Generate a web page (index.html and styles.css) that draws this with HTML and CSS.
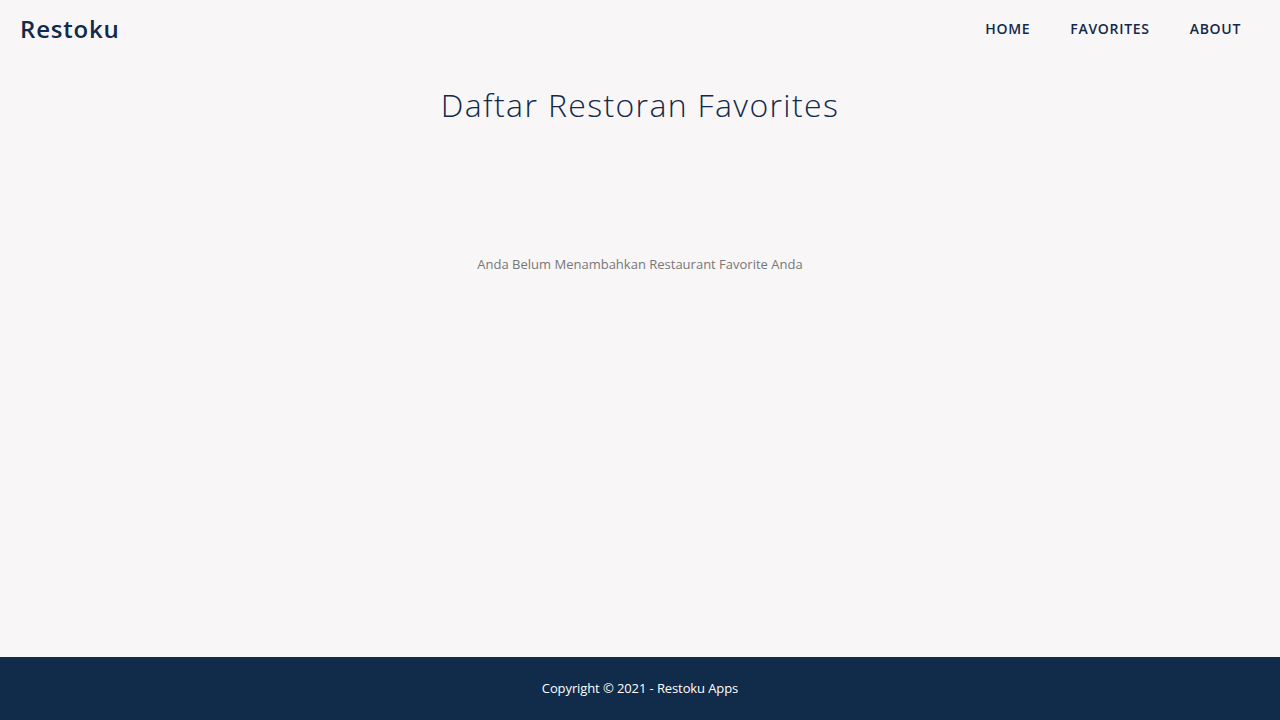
FILE: index.html
```html
<!DOCTYPE html>
<html lang="id">
<head>
<meta charset="utf-8">
<title>Restoku</title>
<link rel="stylesheet" href="styles.css">
</head>
<body>
<div class="page">
  <header class="app-bar">
    <a class="brand" href="#">Restoku</a>
    <nav class="nav">
      <a href="#">HOME</a>
      <a href="#">FAVORITES</a>
      <a href="#">ABOUT</a>
    </nav>
  </header>
  <main class="content">
    <h1 class="title">Daftar Restoran Favorites</h1>
    <p class="empty">Anda Belum Menambahkan Restaurant Favorite Anda</p>
  </main>
  <footer class="footer">
    <p>Copyright © 2021 - Restoku Apps</p>
  </footer>
</div>
</body>
</html>
```
FILE: styles.css
```css
* { box-sizing: border-box; }
html, body { margin: 0; padding: 0; }
body {
  background: #f8f6f7;
  font-family: "Open Sans", "Liberation Sans", sans-serif;
  color: #12294a;
}
.page {
  min-height: 720px;
  display: flex;
  flex-direction: column;
}
.app-bar {
  height: 57px;
  display: flex;
  align-items: center;
  justify-content: space-between;
  padding: 0 39px 0 20px;
}
.brand {
  font-size: 24px;
  font-weight: 600;
  color: #12294a;
  text-decoration: none;
  letter-spacing: 0.8px;
}
.nav {
  display: flex;
  gap: 40px;
}
.nav a {
  font-size: 14px;
  font-weight: 600;
  color: #12294a;
  text-decoration: none;
  letter-spacing: 0.7px;
}
.content {
  flex: 1;
  display: flex;
  flex-direction: column;
  align-items: center;
}
.title {
  margin: 26px 0 0;
  font-size: 32px;
  font-weight: 300;
  color: #12294a;
  letter-spacing: 1.35px;
}
.empty {
  margin: 129px 0 0;
  font-size: 13px;
  color: #777777;
}
.footer {
  height: 63px;
  background: #112b4b;
  display: flex;
  align-items: center;
  justify-content: center;
}
.footer p {
  margin: 0 0 2px;
  font-size: 13px;
  color: #ffffff;
  letter-spacing: -0.1px;
}
```
